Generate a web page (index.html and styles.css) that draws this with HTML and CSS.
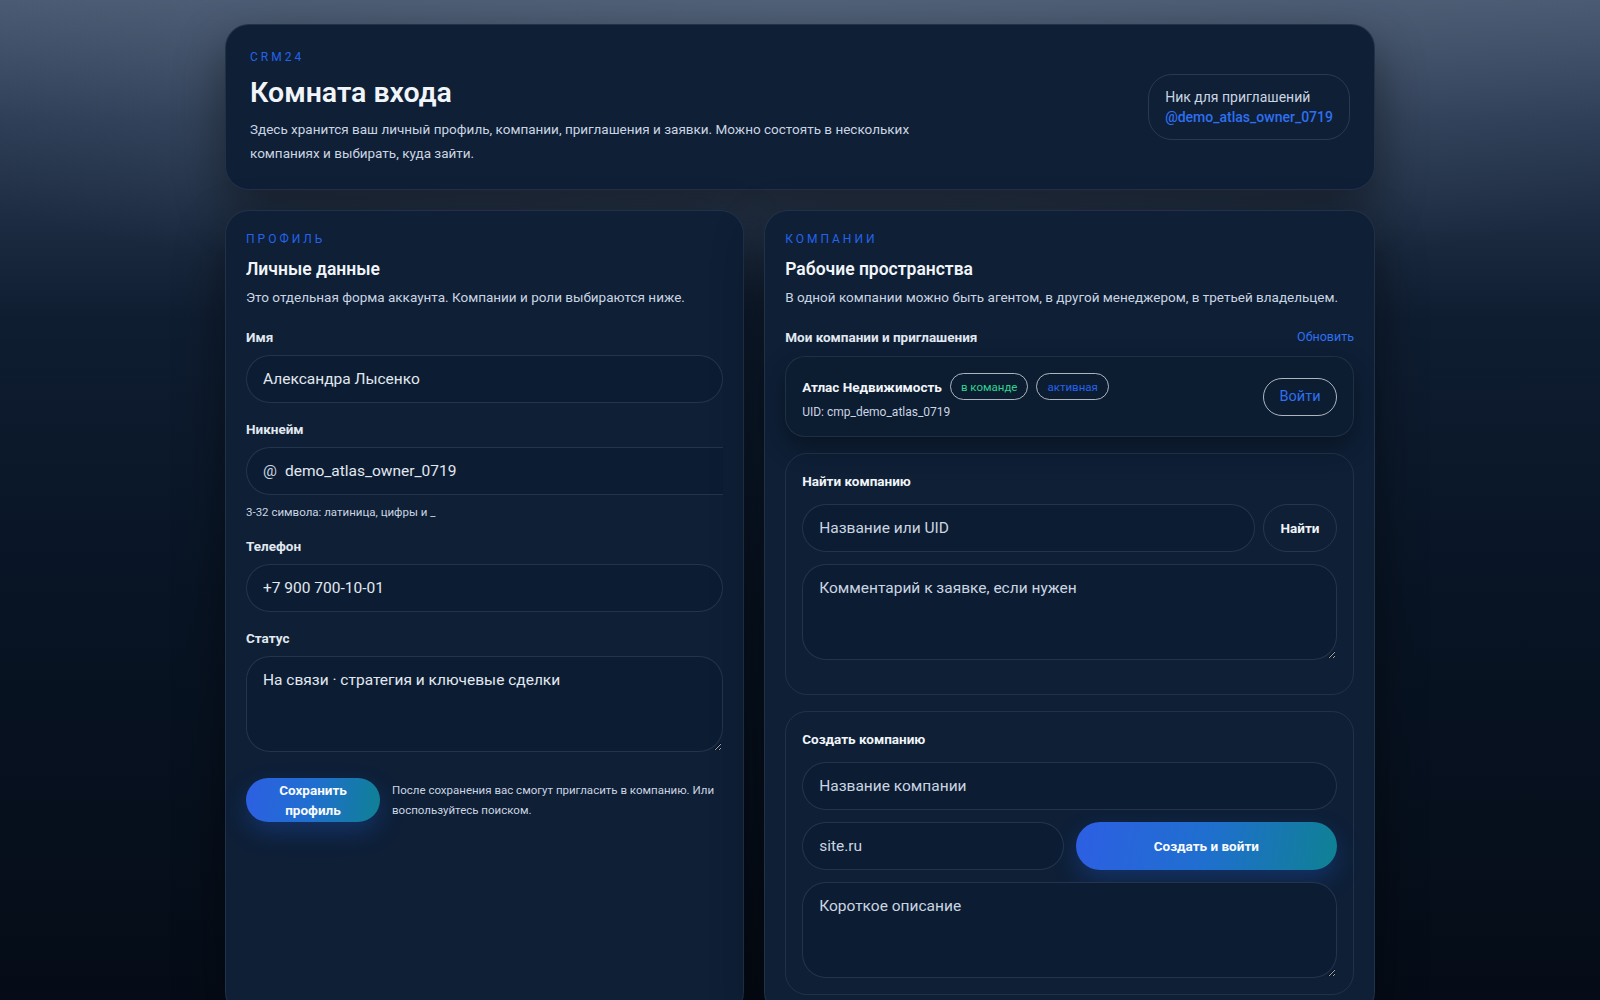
FILE: index.html
```html
<!DOCTYPE html>
<html lang="ru">
<head>
    <meta charset="UTF-8">
    <meta name="viewport" content="width=device-width, initial-scale=1.0">
    <title>CRM24 — Комната входа</title>
    <link rel="stylesheet" href="styles.css">
</head>
<body>
    <main class="page">
        <header class="hero card">
            <div class="hero-text">
                <div class="eyebrow">CRM24</div>
                <h1>Комната входа</h1>
                <p>Здесь хранится ваш личный профиль, компании, приглашения и заявки. Можно состоять в нескольких компаниях и выбирать, куда зайти.</p>
            </div>
            <div class="nick-pill">
                <span>Ник для приглашений</span>
                <strong>@demo_atlas_owner_0719</strong>
            </div>
        </header>

        <div class="columns">
            <section class="card panel">
                <div class="eyebrow">Профиль</div>
                <h2>Личные данные</h2>
                <p class="muted">Это отдельная форма аккаунта. Компании и роли выбираются ниже.</p>

                <form class="form" id="profileForm">
                    <div class="field">
                        <label for="name">Имя</label>
                        <input type="text" id="name" value="Александра Лысенко">
                    </div>
                    <div class="field">
                        <label for="nick">Никнейм</label>
                        <div class="prefixed">
                            <span>@</span>
                            <input type="text" id="nick" value="demo_atlas_owner_0719">
                        </div>
                        <small>3-32 символа: латиница, цифры и _</small>
                    </div>
                    <div class="field">
                        <label for="phone">Телефон</label>
                        <input type="text" id="phone" value="+7 900 700-10-01">
                    </div>
                    <div class="field">
                        <label for="status">Статус</label>
                        <textarea id="status">На связи · стратегия и ключевые сделки</textarea>
                    </div>
                    <div class="actions">
                        <button type="button" class="btn-primary btn-save">Сохранить профиль</button>
                        <span class="note">После сохранения вас смогут пригласить в компанию. Или воспользуйтесь поиском.</span>
                    </div>
                </form>
            </section>

            <section class="card panel">
                <div class="eyebrow">Компании</div>
                <h2>Рабочие пространства</h2>
                <p class="muted">В одной компании можно быть агентом, в другой менеджером, в третьей владельцем.</p>

                <div class="list-head">
                    <span>Мои компании и приглашения</span>
                    <a href="#">Обновить</a>
                </div>

                <div class="company">
                    <div class="company-info">
                        <div class="company-name">
                            <strong>Атлас Недвижимость</strong>
                            <span class="badge green">в команде</span>
                            <span class="badge blue">активная</span>
                        </div>
                        <div class="uid">UID: cmp_demo_atlas_0719</div>
                    </div>
                    <button type="button" class="btn-enter">Войти</button>
                </div>

                <div class="box box-search">
                    <h3>Найти компанию</h3>
                    <div class="row">
                        <input type="text" placeholder="Название или UID">
                        <button type="button" class="btn-ghost">Найти</button>
                    </div>
                    <textarea placeholder="Комментарий к заявке, если нужен"></textarea>
                </div>

                <div class="box">
                    <h3>Создать компанию</h3>
                    <input type="text" placeholder="Название компании">
                    <div class="row half">
                        <input type="text" placeholder="site.ru">
                        <button type="button" class="btn-primary">Создать и войти</button>
                    </div>
                    <textarea placeholder="Короткое описание"></textarea>
                </div>
            </section>
        </div>
    </main>
</body>
</html>
```

FILE: styles.css
```css
* {
    box-sizing: border-box;
}
body {
    margin: 0;
    min-height: 100vh;
    font-family: "Segoe UI", Roboto, "Noto Sans", sans-serif;
    color: #e2e8f0;
    background:
        radial-gradient(ellipse 70% 30% at 50% 0%, rgba(90, 106, 128, 0.55), transparent 100%),
        linear-gradient(180deg, #485870 0%, #2a3a52 12%, #0f1d31 32%, #081424 60%, #050c17 100%);
    background-attachment: fixed;
}
.page {
    width: 1150px;
    margin: 0 auto;
    padding-top: 24px;
}
.card {
    background: #0e1f36;
    border: 1px solid rgba(148, 163, 184, 0.14);
    border-radius: 24px;
    box-shadow: 0 20px 50px rgba(0, 0, 0, 0.45);
}
.eyebrow {
    font-size: 12px;
    line-height: 16px;
    letter-spacing: 3px;
    text-transform: uppercase;
    color: #2563eb;
}
.hero {
    display: flex;
    justify-content: space-between;
    align-items: center;
    padding: 24px;
}
.hero h1 {
    margin: 10px 0 6px;
    font-size: 28.5px;
    line-height: 36px;
    font-weight: 600;
    color: #f1f5f9;
}
.hero p {
    margin: 0;
    max-width: 680px;
    font-size: 13.5px;
    line-height: 24px;
    color: #cbd5e1;
}
.nick-pill {
    display: flex;
    flex-direction: column;
    padding: 12px 16px;
    border: 1px solid rgba(148, 163, 184, 0.2);
    border-radius: 24px;
    font-size: 14px;
    line-height: 20px;
    color: #cbd5e1;
}
.nick-pill strong {
    font-weight: 500;
    color: #2f6ff0;
}
.columns {
    display: grid;
    grid-template-columns: 0.85fr 1fr;
    gap: 20px;
    margin-top: 20px;
}
.panel {
    padding: 20px;
}
.panel h2 {
    margin: 10px 0 6px;
    font-size: 17.5px;
    line-height: 24px;
    font-weight: 600;
    color: #f1f5f9;
}
.muted {
    margin: 0;
    font-size: 13.5px;
    line-height: 20px;
    color: #cbd5e1;
}
.form {
    display: flex;
    flex-direction: column;
    gap: 17px;
    margin-top: 21px;
}
.field {
    display: flex;
    flex-direction: column;
}
.field label {
    margin-bottom: 9px;
    font-size: 13.5px;
    line-height: 18px;
    font-weight: 700;
    color: #e2e8f0;
}
.field small {
    margin-top: 9px;
    font-size: 11.5px;
    line-height: 16px;
    color: #cbd5e1;
}
input, textarea {
    width: 100%;
    height: 48px;
    padding: 0 16px;
    font-family: inherit;
    font-size: 15.5px;
    color: #e2e8f0;
    background: #0c1d33;
    border: 1px solid rgba(148, 163, 184, 0.18);
    border-radius: 24px;
    outline: none;
}
textarea {
    height: 96px;
    padding: 12px 16px;
    line-height: 22px;
    resize: vertical;
}
input::placeholder, textarea::placeholder {
    color: #cbd5e1;
}
.prefixed {
    display: flex;
    align-items: center;
    height: 48px;
    padding-left: 16px;
    background: #0c1d33;
    border: 1px solid rgba(148, 163, 184, 0.18);
    border-right: none;
    border-radius: 24px 0 0 24px;
    font-size: 15.5px;
    color: #cbd5e1;
}
.prefixed input {
    height: 46px;
    border: none;
    padding-left: 8px;
    background: transparent;
}
.actions {
    display: flex;
    align-items: center;
    gap: 12px;
    margin-top: 9px;
}
.btn-primary {
    height: 48px;
    border: none;
    border-radius: 24px;
    font-family: inherit;
    font-size: 13.5px;
    font-weight: 700;
    color: #f8fafc;
    background: linear-gradient(100deg, #2d5fe3 0%, #1f6fcf 50%, #0f8193 100%);
    box-shadow: 0 10px 24px rgba(37, 99, 235, 0.28);
    cursor: pointer;
}
.btn-save {
    flex: none;
    width: 134px;
    height: 44px;
    padding: 0 16px;
    line-height: 20px;
}
.note {
    font-size: 11.5px;
    line-height: 20px;
    color: #cbd5e1;
}
.list-head {
    display: flex;
    justify-content: space-between;
    align-items: center;
    margin: 21px 0 10px;
    font-size: 13.5px;
    line-height: 18px;
    font-weight: 700;
}
.list-head a {
    font-size: 12.5px;
    font-weight: 400;
    color: #2f6ff0;
    text-decoration: none;
}
.company {
    display: flex;
    justify-content: space-between;
    align-items: center;
    padding: 16px;
    background: #0c1c31;
    border: 1px solid rgba(148, 163, 184, 0.14);
    border-radius: 20px;
    box-shadow: 0 10px 24px rgba(0, 0, 0, 0.35);
}
.company-name {
    display: flex;
    align-items: center;
    gap: 8px;
}
.company-name strong {
    font-size: 13.5px;
    font-weight: 700;
    color: #f1f5f9;
}
.badge {
    display: inline-flex;
    align-items: center;
    height: 27px;
    padding: 0 10px;
    font-size: 11.5px;
    border: 1px solid rgba(226, 232, 240, 0.75);
    border-radius: 14px;
}
.badge.green {
    color: #2fd38d;
}
.badge.blue {
    color: #2563eb;
}
.uid {
    margin-top: 4px;
    font-size: 12px;
    line-height: 16px;
    color: #cbd5e1;
}
.btn-enter {
    width: 74px;
    height: 38px;
    font-family: inherit;
    font-size: 14.5px;
    color: #2f6ff0;
    background: transparent;
    border: 1px solid rgba(226, 232, 240, 0.75);
    border-radius: 20px;
    cursor: pointer;
}
.box {
    display: flex;
    flex-direction: column;
    gap: 12px;
    margin-top: 16px;
    padding: 17px 16px 16px;
    border: 1px solid rgba(148, 163, 184, 0.14);
    border-radius: 22px;
}
.box-search {
    padding-bottom: 34px;
}
.box h3 {
    margin: 0 0 1px;
    font-size: 13.5px;
    line-height: 20px;
    font-weight: 700;
    color: #f1f5f9;
}
.row {
    display: flex;
    gap: 8px;
}
.btn-ghost {
    flex: none;
    width: 74px;
    height: 48px;
    font-family: inherit;
    font-size: 13.5px;
    font-weight: 700;
    color: #f1f5f9;
    background: transparent;
    border: 1px solid rgba(148, 163, 184, 0.18);
    border-radius: 24px;
    cursor: pointer;
}
.row.half {
    display: grid;
    grid-template-columns: 1fr 1fr;
    gap: 12px;
}
```
